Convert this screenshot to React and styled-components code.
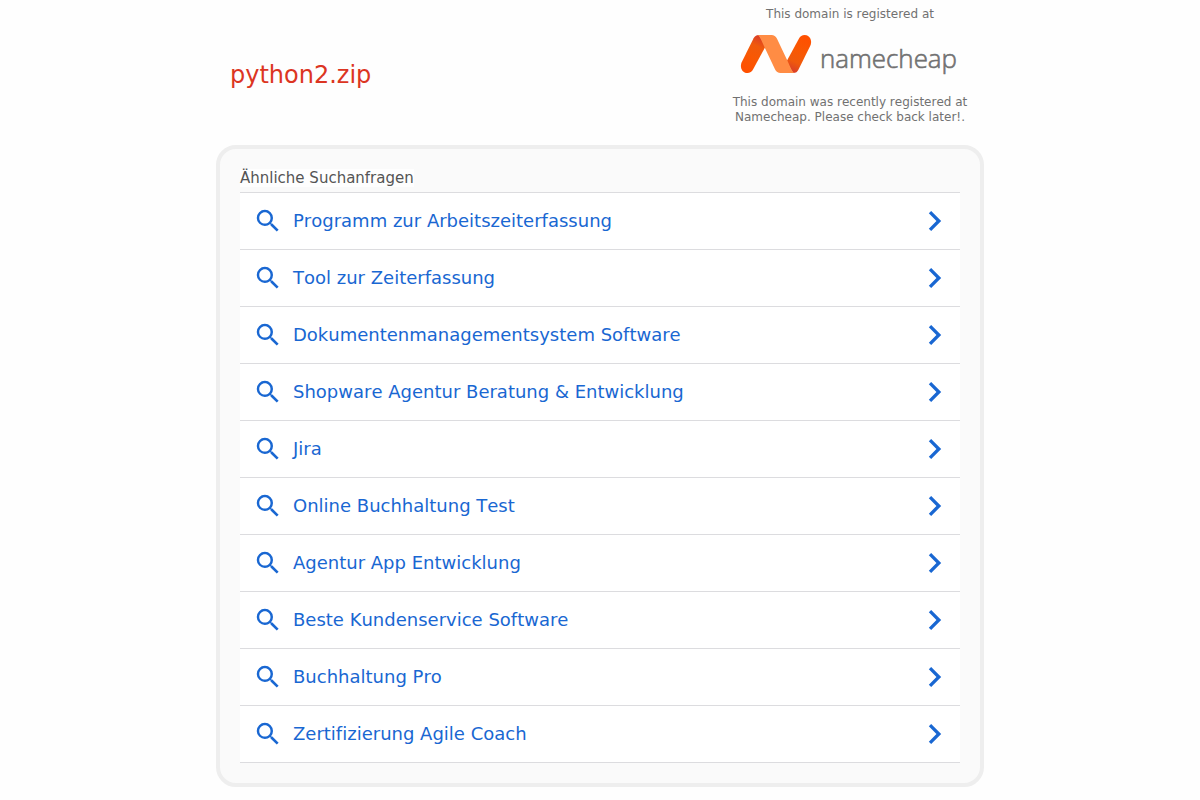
import React from "react";
import styled, { createGlobalStyle } from "styled-components";

const GlobalStyle = createGlobalStyle`
  * { box-sizing: border-box; }
  body {
    margin: 0;
    background: #fefefe;
    font-family: "DejaVu Sans", Verdana, sans-serif;
    font-kerning: none;
    font-variant-ligatures: none;
    overflow: hidden;
  }
`;

const Page = styled.div`
  width: 768px;
  margin: 0 auto;
`;

const Header = styled.header`
  display: flex;
  justify-content: space-between;
  height: 145px;
  padding: 0 14px;
`;

const Domain = styled.h1`
  margin: 61px 0 0;
  font-size: 24px;
  line-height: 28px;
  font-weight: 400;
  color: #dc3522;
`;

const Registrar = styled.div`
  width: 240px;
  display: flex;
  flex-direction: column;
  align-items: center;
  text-align: center;
  font-size: 12px;
  line-height: 15px;
  color: #717171;
  padding-top: 7px;
`;

const Note = styled.p`
  margin: 0;
  white-space: nowrap;
`;

const Logo = styled.svg`
  display: block;
  width: 240px;
  height: 60px;
  margin: 3px 0 10px;
  flex: none;
`;

const Panel = styled.main`
  height: 642px;
  border: 4px solid #eee;
  border-radius: 20px;
  background: #fafafa;
  padding: 20px;
`;

const PanelTitle = styled.h2`
  width: fit-content;
  margin: 0 0 5px;
  background: #fefefe;
  font-size: 15px;
  line-height: 18px;
  font-weight: 400;
  color: #555;
`;

const List = styled.ul`
  margin: 0;
  padding: 0;
  list-style: none;
  border-top: 1px solid #dcdcdf;
`;

const Row = styled.li`
  height: 57px;
  background: #fff;
  border-bottom: 1px solid #dcdcdf;
`;

const RowLink = styled.a`
  display: flex;
  align-items: center;
  height: 100%;
  padding: 0 5px 0 13px;
  color: #1967d2;
  font-size: 18px;
  text-decoration: none;
`;

const Label = styled.span`
  flex: 1;
  margin-left: 10px;
  padding-bottom: 2px;
`;

const Icon = styled.svg`
  width: ${(p) => p.$size}px;
  height: ${(p) => p.$size}px;
  fill: currentColor;
  flex: none;
`;

const searches = [
  "Programm zur Arbeitszeiterfassung",
  "Tool zur Zeiterfassung",
  "Dokumentenmanagementsystem Software",
  "Shopware Agentur Beratung & Entwicklung",
  "Jira",
  "Online Buchhaltung Test",
  "Agentur App Entwicklung",
  "Beste Kundenservice Software",
  "Buchhaltung Pro",
  "Zertifizierung Agile Coach",
];

function NamecheapLogo() {
  return (
    <Logo viewBox="730 25 240 60" role="img" aria-label="namecheap">
      <defs>
        <linearGradient id="left" gradientUnits="userSpaceOnUse" x1="762" y1="36" x2="746" y2="70">
          <stop offset="0" stopColor="#d63a2c" />
          <stop offset="0.3" stopColor="#f05a0c" />
          <stop offset="0.6" stopColor="#f85804" />
          <stop offset="1" stopColor="#ff5000" />
        </linearGradient>
        <linearGradient id="right" gradientUnits="userSpaceOnUse" x1="790" y1="72" x2="806" y2="38">
          <stop offset="0" stopColor="#d63a2c" />
          <stop offset="0.3" stopColor="#f05a0c" />
          <stop offset="0.6" stopColor="#f85804" />
          <stop offset="1" stopColor="#ff5000" />
        </linearGradient>
      </defs>
      <path d="M753 69.500L765.500 46.500L759 35C756 35 754.600 36.300 753.600 38.300L741.700 62.300C739.500 67 742 73 747.300 73C750 73 751.900 71.500 753 69.500Z" fill="url(#left)" />
      <path d="M799 38.500L786.500 61.500L793 73C796 73 797.400 71.700 798.400 69.700L810.300 45.700C812.500 41 810 35 804.700 35C802 35 800.100 36.500 799 38.500Z" fill="url(#right)" />
      <path d="M757.500 35H771.500C774 35 775.800 36.500 776.900 38.500L788.500 63C790.500 67.500 792 71.800 794.500 73H780.500C778 73 776.200 71.500 775.100 69.500L763.500 45C761.500 40.500 760 36.200 757.500 35Z" fill="#ff8c44" />
      <text x="820" y="67.5" fontFamily='"Open Sans", sans-serif' fontWeight="300" fontSize="25.5" textLength="137" lengthAdjust="spacingAndGlyphs" fill="#717171" stroke="#717171" strokeWidth="0.6">
        namecheap
      </text>
    </Logo>
  );
}

export default function App() {
  return (
    <>
      <GlobalStyle />
      <Page>
        <Header>
          <Domain>python2.zip</Domain>
          <Registrar>
            <Note>This domain is registered at</Note>
            <NamecheapLogo />
            <Note>
              This domain was recently registered at
              <br />
              Namecheap. Please check back later!.
            </Note>
          </Registrar>
        </Header>
        <Panel>
          <PanelTitle>Ähnliche Suchanfragen</PanelTitle>
          <List>
            {searches.map((text) => (
              <Row key={text}>
                <RowLink>
                  <Icon $size={30} viewBox="0 0 24 24">
                    <path d="M15.5 14h-.79l-.28-.27A6.471 6.471 0 0 0 16 9.500 6.500 6.500 0 1 0 9.500 16c1.610 0 3.090-.59 4.230-1.570l.27.28v.79l5 4.990L20.490 19l-4.990-5zm-6 0C7.010 14 5 11.990 5 9.500S7.010 5 9.500 5 14 7.010 14 9.500 11.990 14 9.500 14z" />
                  </Icon>
                  <Label>{text}</Label>
                  <Icon $size={40} viewBox="0.3 0 24 24">
                    <path d="M10 6L8.590 7.410 13.170 12l-4.580 4.590L10 18l6-6z" />
                  </Icon>
                </RowLink>
              </Row>
            ))}
          </List>
        </Panel>
      </Page>
    </>
  );
}
